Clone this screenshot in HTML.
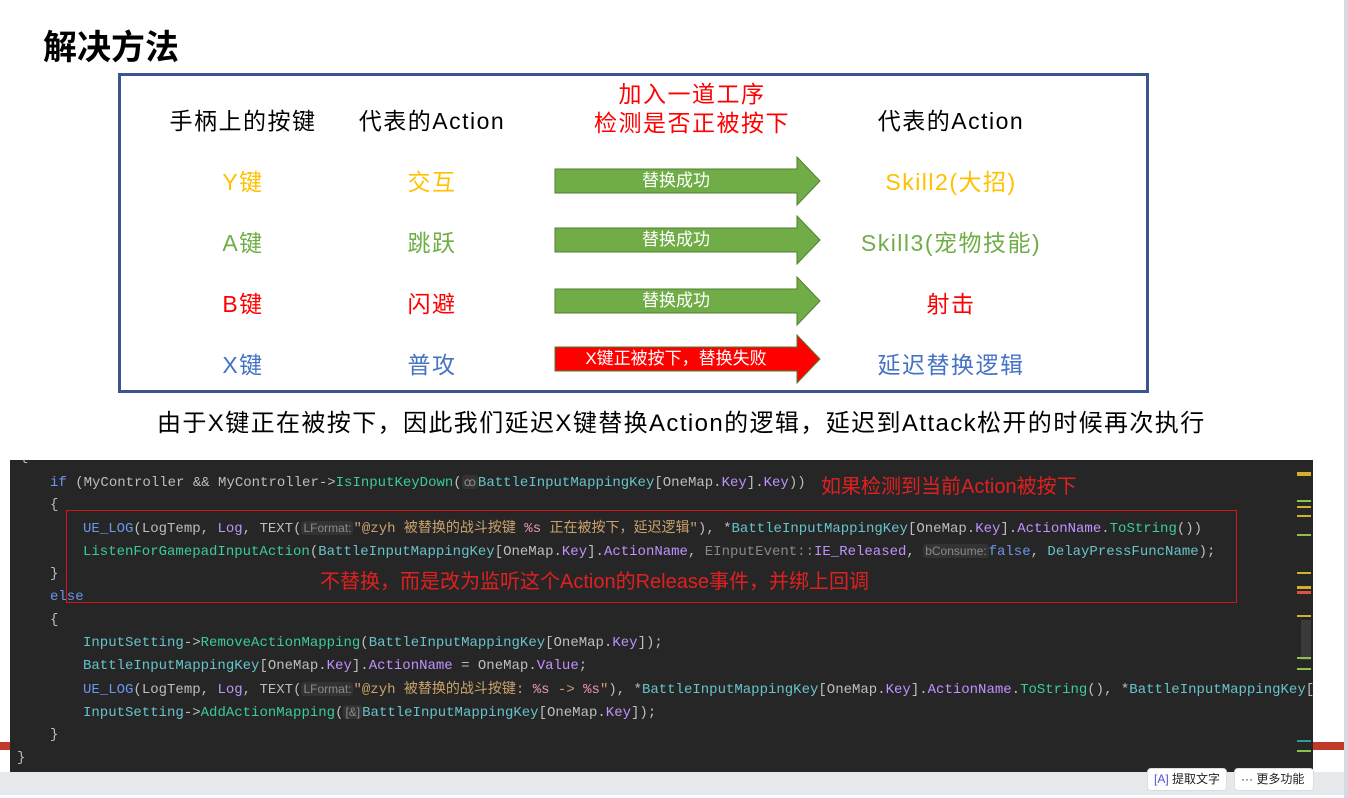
<!DOCTYPE html>
<html><head><meta charset="utf-8"><style>
*{margin:0;padding:0;box-sizing:border-box}
body{width:1348px;height:798px;background:#fff;position:relative;overflow:hidden;font-family:"Liberation Sans","Noto Sans CJK SC",sans-serif}
.a{position:absolute;white-space:nowrap}
.t{font-size:23px;letter-spacing:1.5px;transform:translateX(-50%);line-height:26px}
.arrow{position:absolute;left:555px;width:266px;height:48px}
.arrow span{position:absolute;left:0;width:242px;top:12px;height:24px;text-align:center;color:#fff;font-size:17px;line-height:24px}
.code{position:absolute;left:10px;top:460px;width:1303px;height:312px;background:#262626;overflow:hidden;font-family:"Liberation Mono","Noto Sans CJK SC",monospace;font-size:14px;color:#bdbdbd}
.l{position:absolute;white-space:pre;line-height:23px}
.k{color:#6c95eb}.f{color:#39cc9b}.v{color:#66c3cc}.s{color:#c9a26d}.p{color:#ed94c0}.h{color:#8a8a8a;background:#333;font-family:"Liberation Sans",sans-serif;font-size:12px;padding:0 2px;border-radius:3px}.m{color:#c191ff}
.btn{position:absolute;top:768px;height:23px;background:#fff;border:1px solid #ddd;border-radius:4px;font-size:12px;line-height:21px;padding-left:6px;color:#222}
</style></head><body>
<div class="a" style="left:43px;top:28px;font-size:34px;font-weight:bold;line-height:40px">解决方法</div>
<div class="a" style="left:118px;top:73px;width:1031px;height:320px;border:3px solid #3a5590"></div>
<div class="a t" style="left:243px;top:108px">手柄上的按键</div>
<div class="a t" style="left:432px;top:108px">代表的Action</div>
<div class="a t" style="left:692px;top:81px;color:#f00">加入一道工序</div>
<div class="a t" style="left:692px;top:110px;color:#f00">检测是否正被按下</div>
<div class="a t" style="left:951px;top:108px">代表的Action</div>

<div class="a t" style="left:243px;top:169px;color:#ffc000">Y键</div>
<div class="a t" style="left:432px;top:169px;color:#ffc000">交互</div>
<div class="a t" style="left:951px;top:169px;color:#ffc000">Skill2(大招)</div>
<div class="a t" style="left:243px;top:230px;color:#70ad47">A键</div>
<div class="a t" style="left:432px;top:230px;color:#70ad47">跳跃</div>
<div class="a t" style="left:951px;top:230px;color:#70ad47">Skill3(宠物技能)</div>
<div class="a t" style="left:243px;top:291px;color:#f00">B键</div>
<div class="a t" style="left:432px;top:291px;color:#f00">闪避</div>
<div class="a t" style="left:951px;top:291px;color:#f00">射击</div>
<div class="a t" style="left:243px;top:352px;color:#4472c4">X键</div>
<div class="a t" style="left:432px;top:352px;color:#4472c4">普攻</div>
<div class="a t" style="left:951px;top:352px;color:#4472c4">延迟替换逻辑</div>

<svg class="a" style="left:554px;top:156px" width="270" height="230">
<g stroke="#507e32" stroke-width="1">
<polygon points="1,13 243,13 243,1 266,25 243,49 243,37 1,37" fill="#70ad47"/>
<polygon points="1,72 243,72 243,60 266,84 243,108 243,96 1,96" fill="#70ad47"/>
<polygon points="1,133 243,133 243,121 266,145 243,169 243,157 1,157" fill="#70ad47"/>
<polygon points="1,191 243,191 243,179 266,203 243,227 243,215 1,215" fill="#f00"/>
</g></svg>
<div class="arrow" style="top:157px"><span>替换成功</span></div>
<div class="arrow" style="top:216px"><span>替换成功</span></div>
<div class="arrow" style="top:277px"><span>替换成功</span></div>
<div class="arrow" style="top:335px"><span>X键正被按下，替换失败</span></div>

<div class="a" style="left:157px;top:410px;font-size:24px;letter-spacing:1.4px;line-height:28px">由于X键正在被按下，因此我们延迟X键替换Action的逻辑，延迟到Attack松开的时候再次执行</div>

<div class="code">
<div class="l" style="left:10px;top:-14px">{</div>
<div class="l" style="left:40px;top:11px"><span class="k">if</span> (MyController &amp;&amp; MyController-&gt;<span class="f">IsInputKeyDown</span>(<span class="h">ꝏ</span><span class="v">BattleInputMappingKey</span>[OneMap.<span class="m">Key</span>].<span class="m">Key</span>))</div>
<div class="a" style="left:811px;top:10px;color:#e02020;font-size:20px;font-family:'Liberation Sans','Noto Sans CJK SC',sans-serif">如果检测到当前Action被按下</div>
<div class="l" style="left:40px;top:34px">{</div>
<div class="l" style="left:73px;top:57px"><span class="k">UE_LOG</span>(LogTemp, <span class="m">Log</span>, TEXT(<span class="h">LFormat:</span><span class="s">"@zyh 被替换的战斗按键 </span><span class="p">%s</span><span class="s"> 正在被按下，延迟逻辑"</span>), *<span class="v">BattleInputMappingKey</span>[OneMap.<span class="m">Key</span>].<span class="m">ActionName</span>.<span class="f">ToString</span>())</div>
<div class="l" style="left:73px;top:80px"><span class="f">ListenForGamepadInputAction</span>(<span class="v">BattleInputMappingKey</span>[OneMap.<span class="m">Key</span>].<span class="m">ActionName</span>, <span style="color:#888">EInputEvent::</span><span class="m">IE_Released</span>, <span class="h">bConsume:</span><span class="k">false</span>, <span class="v">DelayPressFuncName</span>);</div>
<div class="l" style="left:40px;top:103px">}</div>
<div class="a" style="left:310px;top:105px;color:#e02020;font-size:20px;font-family:'Liberation Sans','Noto Sans CJK SC',sans-serif">不替换，而是改为监听这个Action的Release事件，并绑上回调</div>
<div class="l k" style="left:40px;top:126px">else</div>
<div class="l" style="left:40px;top:149px">{</div>
<div class="l" style="left:73px;top:172px"><span class="v">InputSetting</span>-&gt;<span class="f">RemoveActionMapping</span>(<span class="v">BattleInputMappingKey</span>[OneMap.<span class="m">Key</span>]);</div>
<div class="l" style="left:73px;top:195px"><span class="v">BattleInputMappingKey</span>[OneMap.<span class="m">Key</span>].<span class="m">ActionName</span> = OneMap.<span class="m">Value</span>;</div>
<div class="l" style="left:73px;top:218px"><span class="k">UE_LOG</span>(LogTemp, <span class="m">Log</span>, TEXT(<span class="h">LFormat:</span><span class="s">"@zyh 被替换的战斗按键: </span><span class="p">%s</span><span class="s"> -&gt; </span><span class="p">%s</span><span class="s">"</span>), *<span class="v">BattleInputMappingKey</span>[OneMap.<span class="m">Key</span>].<span class="m">ActionName</span>.<span class="f">ToString</span>(), *<span class="v">BattleInputMappingKey</span>[(</div>
<div class="l" style="left:73px;top:241px"><span class="v">InputSetting</span>-&gt;<span class="f">AddActionMapping</span>(<span class="h">[&amp;]</span><span class="v">BattleInputMappingKey</span>[OneMap.<span class="m">Key</span>]);</div>
<div class="l" style="left:40px;top:264px">}</div>
<div class="l" style="left:7px;top:287px">}</div>
<div class="a" style="top:50px;left:56px;width:1171px;height:93px;border:1px solid #d01818"></div>
<div class="a" style="left:1287px;top:12px;width:14px;height:4px;background:#d4b02a"></div>
<div class="a" style="left:1287px;top:40px;width:14px;height:2px;background:#8bc34a"></div>
<div class="a" style="left:1287px;top:46px;width:14px;height:2px;background:#d4b02a"></div>
<div class="a" style="left:1287px;top:55px;width:14px;height:2px;background:#d4b02a"></div>
<div class="a" style="left:1287px;top:74px;width:14px;height:2px;background:#8bc34a"></div>
<div class="a" style="left:1287px;top:112px;width:14px;height:2px;background:#d4b02a"></div>
<div class="a" style="left:1287px;top:126px;width:14px;height:3px;background:#d4b02a"></div>
<div class="a" style="left:1287px;top:131px;width:14px;height:3px;background:#e05040"></div>
<div class="a" style="left:1287px;top:155px;width:14px;height:2px;background:#d4b02a"></div>
<div class="a" style="left:1291px;top:160px;width:10px;height:40px;background:#3a3a3a"></div>
<div class="a" style="left:1287px;top:197px;width:14px;height:2px;background:#8bc34a"></div>
<div class="a" style="left:1287px;top:208px;width:14px;height:2px;background:#8bc34a"></div>
<div class="a" style="left:1287px;top:280px;width:14px;height:2px;background:#2a9a9a"></div>
<div class="a" style="left:1287px;top:290px;width:14px;height:2px;background:#8bc34a"></div>
</div>
<div class="a" style="left:0;top:742px;width:10px;height:8px;background:#c0392b"></div>
<div class="a" style="left:1313px;top:742px;width:31px;height:8px;background:#c0392b"></div>
<div class="a" style="left:0;top:772px;width:1344px;height:23px;background:#e6e9ec"></div>
<div class="a" style="left:1344px;top:0;width:4px;height:798px;background:#d6d9dd"></div>
<div class="btn" style="left:1147px;width:80px"><span style="color:#5050d0">[A]</span> 提取文字</div>
<div class="btn" style="left:1234px;width:80px">··· 更多功能</div>
</body></html>
